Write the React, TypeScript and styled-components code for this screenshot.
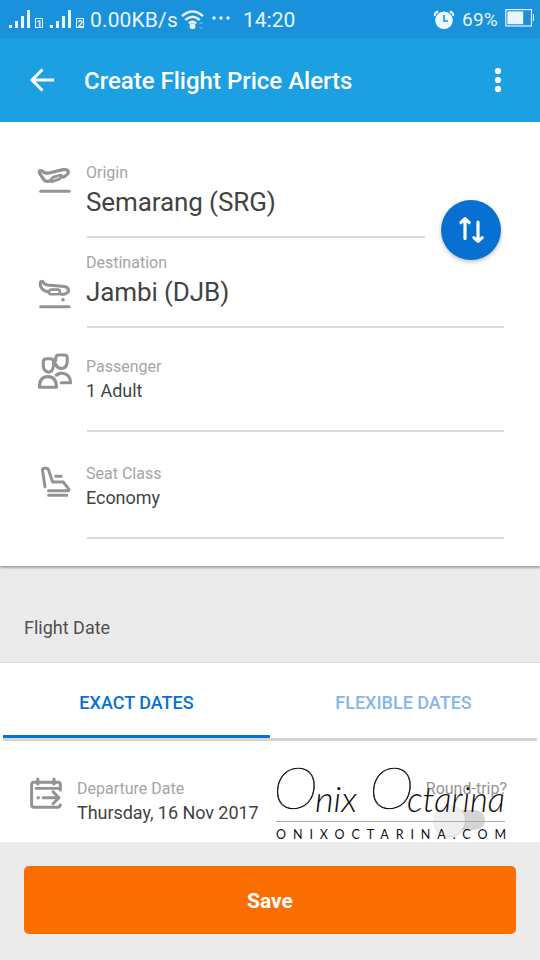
import React from 'react';
import styled, { createGlobalStyle } from 'styled-components';

const GlobalStyle = createGlobalStyle`
  * { box-sizing: border-box; }
  body { margin: 0; background: #ebebeb; font-family: Roboto, "Liberation Sans", sans-serif; }
`;

const Screen = styled.main`
  width: 540px;
  height: 960px;
  overflow: hidden;
  display: flex;
  flex-direction: column;
  background: #ebebeb;
`;

const StatusBar = styled.div`
  height: 38px;
  flex: none;
  display: flex;
  align-items: center;
  padding: 2px 5px 0 9px;
  background: #1992db;
  color: #eaf6fd;
  svg { flex: none; display: block; }
`;

const Signals = styled.div`
  display: flex;
  gap: 5px;
`;

const StatusText = styled.span<{ $size: number; $left: number; $width: number; $spacing?: number }>`
  font-size: ${(p) => p.$size}px;
  line-height: 24px;
  margin-left: ${(p) => p.$left}px;
  width: ${(p) => p.$width}px;
  letter-spacing: ${(p) => p.$spacing ?? 0}px;
  white-space: nowrap;
`;

const StatusGap = styled.span`
  flex: 1;
`;

const AppBar = styled.header`
  height: 84px;
  flex: none;
  display: flex;
  align-items: center;
  padding: 0 30px 0 28px;
  background: #1da0e2;
`;

const BarButton = styled.button`
  display: flex;
  padding: 0;
  border: 0;
  background: none;
  color: #fff;
`;

const Title = styled.h1`
  flex: 1;
  margin: 2px 0 0 30px;
  color: #fff;
  font-size: 24px;
  line-height: 30px;
  font-weight: 500;
  white-space: nowrap;
`;

const Form = styled.section`
  height: 444px;
  flex: none;
  position: relative;
  z-index: 1;
  padding: 26px 36px 0;
  background: #fff;
  box-shadow: 0 2px 2px rgba(0, 0, 0, 0.3);
`;

const Field = styled.div<{ $height: number; $top: number }>`
  height: ${(p) => p.$height}px;
  display: grid;
  grid-template-columns: 51px 1fr;
  padding-top: ${(p) => p.$top}px;
`;

const FieldIcon = styled.span<{ $top?: number }>`
  margin-top: ${(p) => p.$top ?? 0}px;
  color: #939393;
  svg { display: block; }
`;

const FieldBody = styled.div<{ $end?: number }>`
  border-bottom: 2px solid #d9d9d9;
  margin-right: ${(p) => p.$end ?? 0}px;
`;

const Label = styled.div`
  color: #a5a5a5;
  font-size: 16px;
  line-height: 20px;
  margin-left: -1px;
  white-space: nowrap;
`;

const Value = styled.div<{ $large?: boolean }>`
  color: #434343;
  font-size: ${(p) => (p.$large ? 26 : 18)}px;
  line-height: ${(p) => (p.$large ? 38 : 28)}px;
  letter-spacing: ${(p) => (p.$large ? -0.1 : -0.05)}px;
  margin-left: -1px;
  white-space: nowrap;
`;

const SwapButton = styled.button`
  position: absolute;
  right: 39px;
  top: 78px;
  width: 60px;
  height: 60px;
  padding: 0;
  border: 0;
  border-radius: 50%;
  display: grid;
  place-items: center;
  background: #0870d0;
  box-shadow: 0 2px 4px rgba(0, 0, 0, 0.25);
`;

const SectionTitle = styled.h2`
  height: 97px;
  flex: none;
  margin: 0;
  padding: 50px 24px 0;
  border-bottom: 1px solid #dadada;
  color: #505050;
  font-size: 18px;
  line-height: 24px;
  font-weight: 400;
`;

const Tabs = styled.nav`
  height: 78px;
  flex: none;
  display: flex;
  padding: 0 3px;
  background: #fff;
`;

const Tab = styled.button<{ $active?: boolean }>`
  flex: 1;
  padding: 5px 0 0;
  border: 0;
  border-bottom: 3px solid #d4d4d4;
  background: #fff;
  color: ${(p) => (p.$active ? '#0a71d0' : '#84b8e8')};
  font: 500 18px/24px Roboto, sans-serif;
  box-shadow: ${(p) => (p.$active ? 'inset 0 -3px #0a71d0' : 'none')};
`;

const DateRow = styled.section`
  height: 101px;
  flex: none;
  position: relative;
  display: flex;
  padding: 38px 33px 0 29px;
  background: #fff;
`;

const DateText = styled.div`
  margin-left: 15px;
  flex: 1;
`;

const RoundTrip = styled.div`
  display: flex;
  flex-direction: column;
  align-items: center;
`;

const RoundLabel = styled(Label)`
  color: #949494;
`;

const Switch = styled.span`
  width: 38px;
  height: 20px;
  margin: 11px 2px 0 0;
  border-radius: 10px;
  background: #d5d5d5;
  display: flex;
  align-items: center;
`;

const Knob = styled.span`
  flex: none;
  width: 31px;
  height: 31px;
  margin-left: -13px;
  border-radius: 50%;
  background: #efefef;
  box-shadow: 0 1px 2px rgba(0, 0, 0, 0.2);
`;

const Watermark = styled.div`
  position: absolute;
  left: 275px;
  top: 25px;
  width: 232px;
  height: 76px;
  color: #111;
  svg { display: block; overflow: visible; }
`;

const Footer = styled.footer`
  flex: 1;
  padding: 24px;
`;

const SaveButton = styled.button`
  width: 492px;
  height: 68px;
  padding: 2px 0 0;
  border: 0;
  border-radius: 5px;
  background: #fc6e00;
  color: #fff;
  font: 700 21px/24px Roboto, sans-serif;
`;

const stroke = {
  fill: 'none',
  stroke: 'currentColor',
  strokeLinecap: 'round',
  strokeLinejoin: 'round',
} as const;

function Signal({ sim }: { sim: number }) {
  return (
    <svg width="36" height="20" viewBox="0 0 36 20" fill="currentColor">
      <rect x="0" y="15" width="3" height="3" />
      <rect x="6" y="11" width="3" height="7" />
      <rect x="12" y="6" width="3" height="12" />
      <rect x="18" y="0" width="3" height="18" />
      <rect x="26.5" y="8.5" width="7" height="9" fill="none" stroke="currentColor" />
      <text x="27.4" y="17" fontSize="9.5" fontWeight="700" fontFamily="Roboto, sans-serif">{sim}</text>
    </svg>
  );
}

function TakeOff() {
  return (
    <svg width="36" height="34" viewBox="0 0 36 34" {...stroke} strokeWidth="3.2">
      <path d="M14 16Q9.2 17.4 7.4 14L3.8 8.6Q2.4 6.2 4.6 5.6Q6 5.4 7.4 7Q9 8.6 13 8L27 4.6Q32 4 32.4 7.2Q32.3 9.4 27.5 12" />
      <path d="M13.8 15.8L17 12.4L23.8 10.2Q27 10 25.4 12.2L23 14.2L15.8 16.6Z" strokeWidth="2.7" />
      <path d="M4.7 26.3H33.2" strokeWidth="3" />
    </svg>
  );
}

function Landing() {
  return (
    <svg width="36" height="34" viewBox="0 0 36 34" {...stroke} strokeWidth="3.1">
      <path d="M12.5 14Q7 13 5.2 9.6Q4.2 7.4 4.3 4.9Q4.6 2.8 6.6 3.4Q8.2 6.6 11.5 7L28.5 8.5Q32.4 9.6 32.6 12.6Q32.4 15 28 16.2H25" />
      <path d="M15.2 11.6H22.2Q24.2 11.8 23.8 14Q23.5 16.2 21.8 16.2H15Q12.6 16 13.2 13.6Q13.5 11.8 15.2 11.6Z" strokeWidth="2.6" />
      <circle cx="27" cy="21.8" r="1.8" fill="currentColor" stroke="none" />
      <path d="M4.7 28.7H33.2" strokeWidth="3" />
    </svg>
  );
}

function Passengers() {
  return (
    <svg width="38" height="38" viewBox="0 0 38 38" {...stroke} strokeWidth="3.1">
      <path d="M19.8 8.5V5.8Q20 3 23 3H28.3Q31.2 3 31.2 5.8V10Q30.6 16.2 25.7 16.5Q21.4 16.2 20 12.8L18.6 11" />
      <path d="M10.6 6.7H14.5Q17.5 6.7 17.5 9.8V13.6Q16.8 19.9 12.6 20.2Q7.5 19.4 7.3 13.6V9.8Q7.3 6.7 10.6 6.7Z" />
      <path d="M3.4 35.2Q3.4 24.6 11.9 24.6Q20.4 24.6 20.4 35.2Z" />
      <path d="M20.3 23.2Q23 20.9 26.6 21.2Q34 22 34.7 30.7H25.2" />
    </svg>
  );
}

function Seat() {
  return (
    <svg width="36" height="34" viewBox="0 0 36 34" {...stroke} strokeWidth="3">
      <path d="M9 21.8L6.5 5.3Q6.2 3.2 8.5 3.2H10.2Q12 3.2 12.6 5.1L16.6 17H27.2L32.8 24.2Q33.5 25.8 31.5 25.8H12.5" />
      <path d="M19.8 11.2H25.2M12.6 30.3H30.7" />
    </svg>
  );
}

function CalendarArrow() {
  return (
    <svg width="34" height="34" viewBox="0 0 34 34" {...stroke} strokeWidth="3">
      <path d="M31.3 13V7.5Q31.3 5.2 29 5.2H5Q2.6 5.2 2.6 7.6V27.8Q2.6 30.2 5 30.2H28.7Q31 30.2 31.3 28" />
      <path d="M8.8 2.2V7M25 2.2V7" strokeWidth="3.2" />
      <path d="M7 11.4H29.5" strokeWidth="2.7" />
      <path d="M14.2 20.7H30M24 14.7L30 20.7L24 26.7" />
      <circle cx="9.2" cy="20.7" r="1.7" fill="currentColor" stroke="none" />
    </svg>
  );
}

export default function App() {
  return (
    <>
      <GlobalStyle />
      <Screen>
        <StatusBar>
          <Signals>
            <Signal sim={1} />
            <Signal sim={2} />
          </Signals>
          <StatusText $size={21} $left={4} $width={91} $spacing={0.15}>0.00KB/s</StatusText>
          <svg width="24" height="20" viewBox="0 0 24 20" {...stroke} strokeWidth="2.4" strokeLinecap="butt">
            <path d="M1 6.2Q11.5 -3 22 6.2M4.3 10Q11.5 3.5 18.7 10M7.8 13.4Q11.5 10.2 15.2 13.4" />
            <circle cx="11.5" cy="16.2" r="2.9" fill="currentColor" stroke="none" />
            <path d="M18.5 14L20 12.5L21.5 14M18.5 17L20 18.5L21.5 17" strokeWidth="1" opacity=".55" />
          </svg>
          <svg width="30" height="8" viewBox="0 0 30 8" fill="currentColor">
            <circle cx="9" cy="2" r="1.7" /><circle cx="16" cy="2" r="1.7" /><circle cx="23" cy="2" r="1.7" />
          </svg>
          <StatusText $size={21} $left={8} $width={54}>14:20</StatusText>
          <StatusGap />
          <svg width="22" height="20" viewBox="0 0 22 20">
            <path d="M2 6Q1 2.4 5.3 1.6M16.7 1.6Q21 2.4 20 6" fill="none" stroke="currentColor" strokeWidth="2.2" />
            <circle cx="11" cy="10.3" r="8.8" fill="currentColor" />
            <path d="M11 5V11H15" fill="none" stroke="#1992db" strokeWidth="1.6" />
          </svg>
          <StatusText $size={19} $left={7} $width={43} $spacing={0.2}>69%</StatusText>
          <svg width="30" height="22" viewBox="0 0 30 22">
            <rect x="0.8" y="0.6" width="25.7" height="16.4" fill="none" stroke="currentColor" strokeWidth="1.2" />
            <rect x="2.4" y="2.4" width="15.8" height="12.8" fill="currentColor" />
            <path d="M28.5 5V12" stroke="currentColor" />
          </svg>
        </StatusBar>

        <AppBar>
          <BarButton aria-label="Back">
            <svg width="26" height="26" viewBox="0 0 26 26" fill="none" stroke="currentColor" strokeWidth="3">
              <path d="M14.5 2.5L4 13L14.5 23.5M4 13H26" />
            </svg>
          </BarButton>
          <Title>Create Flight Price Alerts</Title>
          <BarButton aria-label="More options">
            <svg width="24" height="26" viewBox="0 0 24 26" fill="currentColor">
              <circle cx="12" cy="4" r="3.1" /><circle cx="12" cy="13" r="3.1" /><circle cx="12" cy="22" r="3.1" />
            </svg>
          </BarButton>
        </AppBar>

        <Form>
          <Field $height={90} $top={15}>
            <FieldIcon $top={2}><TakeOff /></FieldIcon>
            <FieldBody $end={79}>
              <Label>Origin</Label>
              <Value $large>Semarang (SRG)</Value>
            </FieldBody>
          </Field>
          <Field $height={90} $top={15}>
            <FieldIcon $top={25}><Landing /></FieldIcon>
            <FieldBody>
              <Label>Destination</Label>
              <Value $large>Jambi (DJB)</Value>
            </FieldBody>
          </Field>
          <Field $height={104} $top={29}>
            <FieldIcon $top={-5}><Passengers /></FieldIcon>
            <FieldBody>
              <Label>Passenger</Label>
              <Value>1 Adult</Value>
            </FieldBody>
          </Field>
          <Field $height={107} $top={32}>
            <FieldIcon $top={1}><Seat /></FieldIcon>
            <FieldBody>
              <Label>Seat Class</Label>
              <Value>Economy</Value>
            </FieldBody>
          </Field>
          <SwapButton aria-label="Swap origin and destination">
            <svg width="28" height="28" viewBox="0 0 28 28" fill="none" stroke="#fff" strokeWidth="3.2" strokeLinecap="round" strokeLinejoin="round">
              <path d="M8 22.5V3.5M3.8 6.6L8 2.6L12.2 6.6M21 6.2V25M16.8 21.6L21 25.4L25.2 21.6" />
            </svg>
          </SwapButton>
        </Form>

        <SectionTitle>Flight Date</SectionTitle>
        <Tabs>
          <Tab $active>EXACT DATES</Tab>
          <Tab>FLEXIBLE DATES</Tab>
        </Tabs>
        <DateRow>
          <FieldIcon $top={-2}><CalendarArrow /></FieldIcon>
          <DateText>
            <Label>Departure Date</Label>
            <Value>Thursday, 16 Nov 2017</Value>
          </DateText>
          <RoundTrip>
            <RoundLabel>Round-trip?</RoundLabel>
            <Switch><Knob /></Switch>
          </RoundTrip>
          <Watermark>
            <svg width="232" height="76" viewBox="0 0 232 76" fill="currentColor">
              <g fontFamily="Lato, sans-serif" fontStyle="italic" fontWeight="300">
                <text x="-2" y="43" fontSize="58" textLength="45" lengthAdjust="spacingAndGlyphs" fontWeight="200" stroke="currentColor" strokeWidth="0.5">O</text>
                <text x="40" y="46" fontSize="36" textLength="42" lengthAdjust="spacingAndGlyphs">nix</text>
                <text x="94" y="43" fontSize="58" textLength="45" lengthAdjust="spacingAndGlyphs" fontWeight="200" stroke="currentColor" strokeWidth="0.5">O</text>
                <text x="132" y="46" fontSize="36" textLength="98" lengthAdjust="spacingAndGlyphs">ctarina</text>
              </g>
              <path d="M1 55.5H230" stroke="#aaa" />
              <text x="1" y="73" fontFamily="Lato, sans-serif" fontSize="12.5" textLength="230">ONIXOCTARINA.COM</text>
            </svg>
          </Watermark>
        </DateRow>
        <Footer><SaveButton>Save</SaveButton></Footer>
      </Screen>
    </>
  );
}
